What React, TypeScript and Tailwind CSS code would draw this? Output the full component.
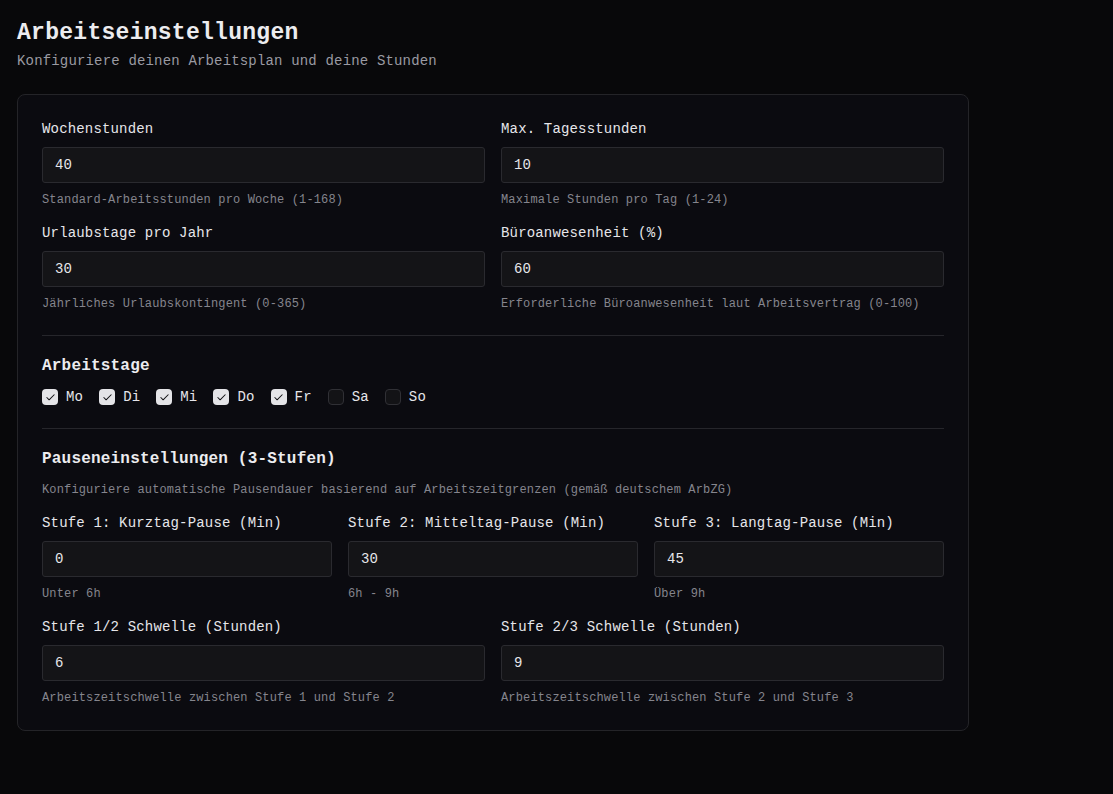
import { Check } from 'lucide-react'

const mono = { fontFamily: '"Liberation Mono", "DejaVu Sans Mono", monospace' }

function Field({ label, value, hint }: { label: string; value: string; hint: string }) {
  return (
    <div className="flex flex-col">
      <label className="text-[14px] leading-5 tracking-[0.012em] text-[#e6e6ea]">{label}</label>
      <input
        readOnly
        value={value}
        className="mt-2 h-9 w-full rounded-[3px] border border-[#2a2a2f] bg-[#141417] px-3 text-[14px] tracking-[0.012em] text-[#e6e6ea] outline-none"
        style={mono}
      />
      <p className="mt-[9px] text-[12px] leading-4 tracking-[0.012em] text-[#85858d]">{hint}</p>
    </div>
  )
}

const days = [
  { d: 'Mo', on: true },
  { d: 'Di', on: true },
  { d: 'Mi', on: true },
  { d: 'Do', on: true },
  { d: 'Fr', on: true },
  { d: 'Sa', on: false },
  { d: 'So', on: false },
]

export default function App() {
  return (
    <div className="min-h-screen bg-[#08080a] px-[17px] pt-[17px] pb-16" style={mono}>
      <h1 className="text-[23px] font-bold leading-8 tracking-[0.012em] text-[#ececef]">Arbeitseinstellungen</h1>
      <p className="mt-0.5 text-[14px] leading-5 tracking-[0.012em] text-[#9a9aa2]">
        Konfiguriere deinen Arbeitsplan und deine Stunden
      </p>

      <div className="mt-[23px] w-[952px] rounded-lg border border-[#242428] bg-[#0b0b10] p-6">
        <div className="grid grid-cols-2 gap-x-4 gap-y-[15px]">
          <Field label="Wochenstunden" value="40" hint="Standard-Arbeitsstunden pro Woche (1-168)" />
          <Field label="Max. Tagesstunden" value="10" hint="Maximale Stunden pro Tag (1-24)" />
          <Field label="Urlaubstage pro Jahr" value="30" hint="Jährliches Urlaubskontingent (0-365)" />
          <Field
            label="Büroanwesenheit (%)"
            value="60"
            hint="Erforderliche Büroanwesenheit laut Arbeitsvertrag (0-100)"
          />
        </div>

        <div className="mt-[23px] border-t border-[#26262b] pt-[18px]">
          <h2 className="text-[16px] font-bold leading-6 tracking-[0.012em] text-[#ececef]">Arbeitstage</h2>
          <div className="mt-[9px] flex h-5 items-center gap-4">
            {days.map((x) => (
              <div key={x.d} className="flex items-center gap-2">
                {x.on ? (
                  <span className="flex h-4 w-4 items-center justify-center rounded-[4px] bg-[#e4e4e7] text-[#111114]">
                    <Check size={11} strokeWidth={2.25} />
                  </span>
                ) : (
                  <span className="h-4 w-4 rounded-[4px] border border-[#303035] bg-[#131316]" />
                )}
                <span className="text-[14px] leading-5 tracking-[0.012em] text-[#e6e6ea]">{x.d}</span>
              </div>
            ))}
          </div>
        </div>

        <div className="mt-[21px] border-t border-[#26262b] pt-[18px]">
          <h2 className="text-[16px] font-bold leading-6 tracking-[0.012em] text-[#ececef]">
            Pauseneinstellungen (3-Stufen)
          </h2>
          <p className="mt-[11px] text-[12px] leading-4 tracking-[0.012em] text-[#85858d]">
            Konfiguriere automatische Pausendauer basierend auf Arbeitszeitgrenzen (gemäß deutschem ArbZG)
          </p>
          <div className="mt-[15px] grid grid-cols-3 gap-4">
            <Field label="Stufe 1: Kurztag-Pause (Min)" value="0" hint="Unter 6h" />
            <Field label="Stufe 2: Mitteltag-Pause (Min)" value="30" hint="6h - 9h" />
            <Field label="Stufe 3: Langtag-Pause (Min)" value="45" hint="Über 9h" />
          </div>
          <div className="mt-[15px] grid grid-cols-2 gap-4">
            <Field
              label="Stufe 1/2 Schwelle (Stunden)"
              value="6"
              hint="Arbeitszeitschwelle zwischen Stufe 1 und Stufe 2"
            />
            <Field
              label="Stufe 2/3 Schwelle (Stunden)"
              value="9"
              hint="Arbeitszeitschwelle zwischen Stufe 2 und Stufe 3"
            />
          </div>
        </div>
      </div>
    </div>
  )
}
